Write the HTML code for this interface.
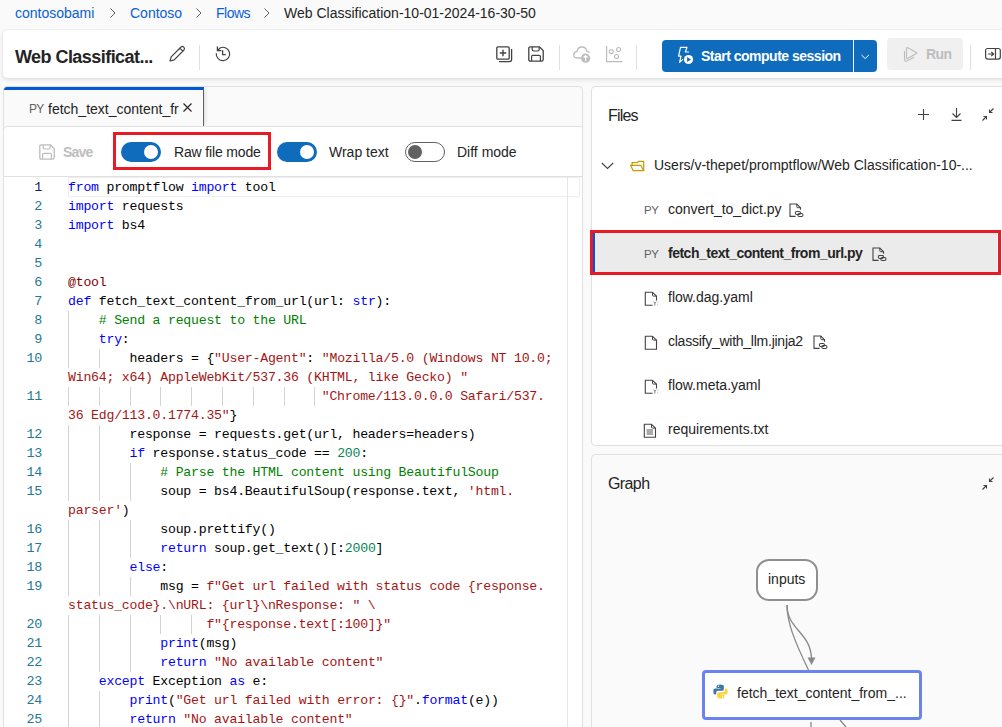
<!DOCTYPE html>
<html><head><meta charset="utf-8">
<style>
*{box-sizing:border-box;margin:0;padding:0}
html,body{width:1002px;height:727px;overflow:hidden;background:#fafafa;font-family:"Liberation Sans",sans-serif;color:#242424}
.a{position:absolute;white-space:nowrap}
svg{position:absolute;overflow:visible}
.bc{font-size:14px;line-height:17px;top:5px;color:#0b5ed7}
#hdr{position:absolute;left:3px;top:30px;width:1010px;height:48px;background:#fff;border-radius:4px;box-shadow:0 2px 4px rgba(0,0,0,.10),0 0 2px rgba(0,0,0,.12)}
#title{left:15px;top:46px;font-size:18px;font-weight:700;letter-spacing:-0.55px;line-height:22px;color:#242424}
.vdiv{position:absolute;width:1px;background:#e0e0e0}
#lp{position:absolute;left:3px;top:86px;width:580px;height:700px;background:#fafafa;border:1px solid #e0e0e0;border-radius:4px;overflow:hidden}
#rp1{position:absolute;left:591px;top:86px;width:430px;height:360px;background:#fff;border:1px solid #e0e0e0;border-radius:4px}
#rp2{position:absolute;left:591px;top:454px;width:430px;height:300px;background:#fafafa;border:1px solid #e0e0e0;border-radius:4px}
.ln{position:absolute;left:0;width:42px;text-align:right;font-family:"Liberation Mono",monospace;font-size:13.4px;letter-spacing:-0.34px;line-height:19px;color:#237893}
.ln.cur{color:#0b216f}
.cl{position:absolute;left:68px;font-family:"Liberation Mono",monospace;font-size:13.2px;letter-spacing:-0.225px;line-height:19px;white-space:pre;color:#000}
.ig{position:absolute;width:1px;height:19px;background:#d3d3d3}
.k{color:#0000ff}.s{color:#a31515}.c{color:#008000}.n{color:#098658}.t{color:#800000}
.tx{font-size:14px;line-height:17px}
.tog{position:absolute;width:40px;height:20px;border-radius:10px;background:#0f6cbd}
.tog i{position:absolute;top:3px;left:23px;width:14px;height:14px;border-radius:50%;background:#fff}
.tog.off{background:#fff;border:1px solid #616161}
.tog.off i{left:2px;top:2px;background:#616161}
.fr{font-size:14px;line-height:17px;color:#242424}
.py{font-size:11.5px;line-height:14px;color:#616161;letter-spacing:-0.5px}
</style></head><body>
<!-- breadcrumb -->
<div class="a bc" style="left:15px">contosobami</div>
<svg style="left:110px;top:8px" width="6" height="10"><path d="M0.5 0.5 L5 5 L0.5 9.5" fill="none" stroke="#616161" stroke-width="1"/></svg>
<div class="a bc" style="left:130px">Contoso</div>
<svg style="left:196px;top:8px" width="6" height="10"><path d="M0.5 0.5 L5 5 L0.5 9.5" fill="none" stroke="#616161" stroke-width="1"/></svg>
<div class="a bc" style="left:216px;letter-spacing:-0.5px">Flows</div>
<svg style="left:264px;top:8px" width="6" height="10"><path d="M0.5 0.5 L5 5 L0.5 9.5" fill="none" stroke="#616161" stroke-width="1"/></svg>
<div class="a bc" style="left:284px;color:#242424">Web Classification-10-01-2024-16-30-50</div>

<!-- header -->
<div id="hdr"></div>
<div class="a" id="title">Web Classificat...</div>
<!-- pencil -->
<svg style="left:168px;top:45px" width="18" height="18" viewBox="0 0 18 18"><path d="M2 16 L3.2 11.8 L13 2 Q14.5 0.8 15.8 2.2 Q17.1 3.6 16 5 L6.2 14.8 Z M11.8 3.2 L14.8 6.2" fill="none" stroke="#424242" stroke-width="1.2" stroke-linejoin="round"/></svg>
<div class="vdiv" style="left:199px;top:45px;height:25px"></div>
<!-- history -->
<svg style="left:215px;top:46px" width="16" height="16" viewBox="0 0 16 16"><path d="M1.3 7.2 A6.7 6.7 0 1 0 4.6 2.2" fill="none" stroke="#424242" stroke-width="1.2"/><path d="M2.4 0.6 V4.6 H6.4 M2.4 4.6 L5 2.2" fill="none" stroke="#424242" stroke-width="1.3"/><path d="M7.6 4.2 V8.6 H10.8" fill="none" stroke="#424242" stroke-width="1.3"/></svg>

<!-- toolbar icons -->
<svg style="left:496px;top:46px" width="17" height="17" viewBox="0 0 17 17"><rect x="0.8" y="0.8" width="12.4" height="12.4" rx="1.2" fill="none" stroke="#424242" stroke-width="1.3"/><path d="M3 15.6 H13.5 Q15.6 15.6 15.6 13.5 V3" fill="none" stroke="#424242" stroke-width="1.3"/><path d="M7 3.8 V10.2 M3.8 7 H10.2" stroke="#424242" stroke-width="1.4"/></svg>
<svg style="left:528px;top:46px" width="16" height="16" viewBox="0 0 16 16"><path d="M2.5 0.8 H11.5 L15.2 4.5 V13.5 Q15.2 15.2 13.5 15.2 H2.5 Q0.8 15.2 0.8 13.5 V2.5 Q0.8 0.8 2.5 0.8 Z" fill="none" stroke="#424242" stroke-width="1.3"/><path d="M4.2 1 V3.6 Q4.2 5 5.6 5 H9.8 Q11.2 5 11.2 3.6 V1 M3.6 15 V10.6 Q3.6 9.4 4.8 9.4 H11.2 Q12.4 9.4 12.4 10.6 V15" fill="none" stroke="#424242" stroke-width="1.2"/></svg>
<div class="vdiv" style="left:559px;top:45px;height:25px"></div>
<svg style="left:573px;top:46px" width="18" height="17" viewBox="0 0 18 17"><path d="M8.5 12 H4 Q0.8 12 0.8 8.8 Q0.8 5.8 4 5.6 Q4.6 1 9 1 Q13.2 1 13.8 5.2 Q15.8 5.4 16.6 7" fill="none" stroke="#bdbdbd" stroke-width="1.3"/><circle cx="12.6" cy="12.2" r="4.6" fill="#bdbdbd"/><path d="M12.6 15 V9.6 M10.6 11.5 L12.6 9.5 L14.6 11.5" fill="none" stroke="#fff" stroke-width="1.2"/></svg>
<svg style="left:606px;top:46px" width="17" height="17" viewBox="0 0 17 17"><path d="M0.6 0 V15.6 H16.5" fill="none" stroke="#bdbdbd" stroke-width="1.2"/><circle cx="5.3" cy="5.6" r="2" fill="none" stroke="#bdbdbd" stroke-width="1.2"/><circle cx="12.6" cy="3.5" r="2" fill="none" stroke="#bdbdbd" stroke-width="1.2"/><circle cx="10.5" cy="10.5" r="2" fill="none" stroke="#bdbdbd" stroke-width="1.2"/></svg>
<div class="vdiv" style="left:636px;top:45px;height:25px"></div>

<!-- start compute session -->
<div class="a" style="left:662px;top:40px;width:215px;height:32px;background:#0f6cbd;border-radius:4px"></div>
<svg style="left:674px;top:44px" width="24" height="24" viewBox="0 0 24 24"><path d="M6.5 3.4 H13 L11.3 8 H14.6 M6.5 3.4 L4.6 12.2 H7 L5.6 18.4 L8.6 15.6" fill="none" stroke="#fff" stroke-width="1.2" stroke-linejoin="round" stroke-linecap="round"/><circle cx="14.5" cy="15.5" r="4.6" fill="#fff"/><path d="M13.1 13.1 L17 15.5 L13.1 17.9 Z" fill="#0f6cbd"/></svg>
<div class="a" style="left:701px;top:48px;font-size:14px;line-height:17px;font-weight:700;color:#fff;letter-spacing:-0.5px">Start compute session</div>
<div class="a" style="left:853px;top:40px;width:1px;height:32px;background:#fff"></div>
<svg style="left:861px;top:54px" width="9" height="6" viewBox="0 0 9 6"><path d="M0.5 1 L4.2 4.6 L7.9 1" fill="none" stroke="#fff" stroke-width="1"/></svg>
<!-- run -->
<div class="a" style="left:887px;top:38px;width:76px;height:32px;background:#f0f0f0;border-radius:4px"></div>
<svg style="left:900px;top:44px" width="20" height="20" viewBox="0 0 20 20"><path d="M7.3 3.5 Q6.5 3.2 6.5 4.3 V14 Q6.5 15.2 7.6 14.6 L16.4 9.6 Q17.2 9 16.4 8.4 Z" fill="none" stroke="#bdbdbd" stroke-width="1.1" stroke-linejoin="round"/><path d="M4.5 7 V15 Q4.5 18 7.5 16.8 L14 13.3" fill="none" stroke="#bdbdbd" stroke-width="1.1"/></svg>
<div class="a" style="left:926px;top:46px;font-size:14px;line-height:17px;font-weight:700;color:#bdbdbd;letter-spacing:-0.6px">Run</div>
<div class="vdiv" style="left:970px;top:45px;height:25px"></div>
<svg style="left:984px;top:47px" width="18" height="14" viewBox="0 0 18 14"><rect x="1.6" y="1.5" width="14.7" height="10.6" rx="2" fill="none" stroke="#424242" stroke-width="1.2"/><path d="M11.5 1.5 V12.1 M4 7 H9.3 M7.3 5 L9.6 7 L7.3 9" fill="none" stroke="#424242" stroke-width="1.2"/></svg>

<!-- left panel -->
<div id="lp">
  <div class="a" style="left:0;top:0;width:200px;height:40px;background:#fafafa;border-top:3px solid #0058d6;border-right:1px solid #616161;box-shadow:3px 0 4px -2px rgba(0,0,0,.14)"></div>
  <div class="a" style="left:0;top:39px;width:580px;height:50px;background:#fff;border-top:1px solid #e0e0e0;border-radius:4px 4px 0 0"></div>
  <div class="a" style="left:0;top:89px;width:580px;height:620px;background:#fff;border-top:1px solid #e0e0e0"></div>
</div>
<div class="a py" style="left:29px;top:102px;font-size:12px;letter-spacing:-0.7px">PY</div>
<div class="a tx" style="left:48px;top:101px;width:131px;overflow:hidden;font-size:14px">fetch_text_content_from_url.py</div>
<svg style="left:183px;top:103px" width="9" height="9" viewBox="0 0 9 9"><path d="M0.5 0.5 L8.5 8.5 M8.5 0.5 L0.5 8.5" stroke="#242424" stroke-width="1.1"/></svg>

<!-- toolbar -->
<svg style="left:39px;top:144px" width="16" height="16" viewBox="0 0 16 16"><path d="M2.5 0.8 H11.5 L15.2 4.5 V13.5 Q15.2 15.2 13.5 15.2 H2.5 Q0.8 15.2 0.8 13.5 V2.5 Q0.8 0.8 2.5 0.8 Z" fill="none" stroke="#bdbdbd" stroke-width="1.3"/><path d="M4.2 1 V3.6 Q4.2 5 5.6 5 H9.8 Q11.2 5 11.2 3.6 V1 M3.6 15 V10.6 Q3.6 9.4 4.8 9.4 H11.2 Q12.4 9.4 12.4 10.6 V15" fill="none" stroke="#bdbdbd" stroke-width="1.2"/></svg>
<div class="a tx" style="left:63px;top:144px;font-weight:700;color:#bdbdbd;letter-spacing:-0.8px">Save</div>
<div class="a" style="left:113px;top:132px;width:158px;height:38px;border:3px solid #ea1a24"></div>
<div class="tog" style="left:121px;top:142px"><i></i></div>
<div class="a tx" style="left:174px;top:144px;letter-spacing:-0.15px">Raw file mode</div>
<div class="tog" style="left:277px;top:142px"><i></i></div>
<div class="a tx" style="left:329px;top:144px">Wrap text</div>
<div class="tog off" style="left:405px;top:142px"><i></i></div>
<div class="a tx" style="left:457px;top:144px">Diff mode</div>

<!-- code -->
<div class="a" style="left:68px;top:177px;width:512px;height:20px;border:1px solid #eeeeee"></div>
<div class="a" style="left:567px;top:177px;width:1px;height:560px;background:#e6e6e6"></div>
<div class="ln cur" style="top:178px">1</div>
<div class="cl" style="top:178px"><span class="k">from</span> promptflow <span class="k">import</span> tool</div>
<div class="ln" style="top:197px">2</div>
<div class="cl" style="top:197px"><span class="k">import</span> requests</div>
<div class="ln" style="top:216px">3</div>
<div class="cl" style="top:216px"><span class="k">import</span> bs4</div>
<div class="ln" style="top:235px">4</div>
<div class="cl" style="top:235px"></div>
<div class="ln" style="top:254px">5</div>
<div class="cl" style="top:254px"></div>
<div class="ln" style="top:273px">6</div>
<div class="cl" style="top:273px"><span class="t">@tool</span></div>
<div class="ln" style="top:292px">7</div>
<div class="cl" style="top:292px"><span class="k">def</span> fetch_text_content_from_url(url: <span class="k">str</span>):</div>
<div class="ln" style="top:311px">8</div>
<div class="ig" style="left:68.0px;top:311px"></div>
<div class="cl" style="top:311px">    <span class="c"># Send a request to the URL</span></div>
<div class="ln" style="top:330px">9</div>
<div class="ig" style="left:68.0px;top:330px"></div>
<div class="cl" style="top:330px">    <span class="k">try</span>:</div>
<div class="ln" style="top:349px">10</div>
<div class="ig" style="left:68.0px;top:349px"></div>
<div class="ig" style="left:98.8px;top:349px"></div>
<div class="cl" style="top:349px">        headers = {<span class="s">"User-Agent"</span>: <span class="s">"Mozilla/5.0 (Windows NT 10.0;</span></div>
<div class="cl" style="top:368px"><span class="s">Win64; x64) AppleWebKit/537.36 (KHTML, like Gecko) "</span></div>
<div class="ln" style="top:387px">11</div>
<div class="ig" style="left:68.0px;top:387px"></div>
<div class="ig" style="left:98.8px;top:387px"></div>
<div class="ig" style="left:129.6px;top:387px"></div>
<div class="ig" style="left:160.4px;top:387px"></div>
<div class="ig" style="left:191.2px;top:387px"></div>
<div class="ig" style="left:221.9px;top:387px"></div>
<div class="ig" style="left:252.7px;top:387px"></div>
<div class="ig" style="left:283.5px;top:387px"></div>
<div class="ig" style="left:314.3px;top:387px"></div>
<div class="cl" style="top:387px">                                 <span class="s">"Chrome/113.0.0.0 Safari/537.</span></div>
<div class="cl" style="top:406px"><span class="s">36 Edg/113.0.1774.35"</span>}</div>
<div class="ln" style="top:425px">12</div>
<div class="ig" style="left:68.0px;top:425px"></div>
<div class="ig" style="left:98.8px;top:425px"></div>
<div class="cl" style="top:425px">        response = requests.get(url, headers=headers)</div>
<div class="ln" style="top:444px">13</div>
<div class="ig" style="left:68.0px;top:444px"></div>
<div class="ig" style="left:98.8px;top:444px"></div>
<div class="cl" style="top:444px">        <span class="k">if</span> response.status_code == <span class="n">200</span>:</div>
<div class="ln" style="top:463px">14</div>
<div class="ig" style="left:68.0px;top:463px"></div>
<div class="ig" style="left:98.8px;top:463px"></div>
<div class="ig" style="left:129.6px;top:463px"></div>
<div class="cl" style="top:463px">            <span class="c"># Parse the HTML content using BeautifulSoup</span></div>
<div class="ln" style="top:482px">15</div>
<div class="ig" style="left:68.0px;top:482px"></div>
<div class="ig" style="left:98.8px;top:482px"></div>
<div class="ig" style="left:129.6px;top:482px"></div>
<div class="cl" style="top:482px">            soup = bs4.BeautifulSoup(response.text, <span class="s">'html.</span></div>
<div class="cl" style="top:501px"><span class="s">parser'</span>)</div>
<div class="ln" style="top:520px">16</div>
<div class="ig" style="left:68.0px;top:520px"></div>
<div class="ig" style="left:98.8px;top:520px"></div>
<div class="ig" style="left:129.6px;top:520px"></div>
<div class="cl" style="top:520px">            soup.prettify()</div>
<div class="ln" style="top:539px">17</div>
<div class="ig" style="left:68.0px;top:539px"></div>
<div class="ig" style="left:98.8px;top:539px"></div>
<div class="ig" style="left:129.6px;top:539px"></div>
<div class="cl" style="top:539px">            <span class="k">return</span> soup.get_text()[:<span class="n">2000</span>]</div>
<div class="ln" style="top:558px">18</div>
<div class="ig" style="left:68.0px;top:558px"></div>
<div class="ig" style="left:98.8px;top:558px"></div>
<div class="cl" style="top:558px">        <span class="k">else</span>:</div>
<div class="ln" style="top:577px">19</div>
<div class="ig" style="left:68.0px;top:577px"></div>
<div class="ig" style="left:98.8px;top:577px"></div>
<div class="ig" style="left:129.6px;top:577px"></div>
<div class="cl" style="top:577px">            msg = <span class="s">f"Get url failed with status code {response.</span></div>
<div class="cl" style="top:596px"><span class="s">status_code}.\nURL: {url}\nResponse: " \</span></div>
<div class="ln" style="top:615px">20</div>
<div class="ig" style="left:68.0px;top:615px"></div>
<div class="ig" style="left:98.8px;top:615px"></div>
<div class="ig" style="left:129.6px;top:615px"></div>
<div class="ig" style="left:160.4px;top:615px"></div>
<div class="ig" style="left:191.2px;top:615px"></div>
<div class="cl" style="top:615px">                  <span class="s">f"{response.text[:100]}"</span></div>
<div class="ln" style="top:634px">21</div>
<div class="ig" style="left:68.0px;top:634px"></div>
<div class="ig" style="left:98.8px;top:634px"></div>
<div class="ig" style="left:129.6px;top:634px"></div>
<div class="cl" style="top:634px">            <span class="k">print</span>(msg)</div>
<div class="ln" style="top:653px">22</div>
<div class="ig" style="left:68.0px;top:653px"></div>
<div class="ig" style="left:98.8px;top:653px"></div>
<div class="ig" style="left:129.6px;top:653px"></div>
<div class="cl" style="top:653px">            <span class="k">return</span> <span class="s">"No available content"</span></div>
<div class="ln" style="top:672px">23</div>
<div class="ig" style="left:68.0px;top:672px"></div>
<div class="cl" style="top:672px">    <span class="k">except</span> Exception <span class="k">as</span> e:</div>
<div class="ln" style="top:691px">24</div>
<div class="ig" style="left:68.0px;top:691px"></div>
<div class="ig" style="left:98.8px;top:691px"></div>
<div class="cl" style="top:691px">        <span class="k">print</span>(<span class="s">"Get url failed with error: {}"</span>.<span class="k">format</span>(e))</div>
<div class="ln" style="top:710px">25</div>
<div class="ig" style="left:68.0px;top:710px"></div>
<div class="ig" style="left:98.8px;top:710px"></div>
<div class="cl" style="top:710px">        <span class="k">return</span> <span class="s">"No available content"</span></div>


<!-- files panel -->
<div id="rp1"></div>
<div class="a" style="left:608px;top:106px;font-size:16px;line-height:19px;letter-spacing:-0.8px;color:#242424">Files</div>
<svg style="left:918px;top:109px" width="11" height="11" viewBox="0 0 11 11"><path d="M5.5 0 V11 M0 5.5 H11" stroke="#424242" stroke-width="1.1"/></svg>
<svg style="left:951px;top:108px" width="11" height="13" viewBox="0 0 11 13"><path d="M5.5 0 V9 M1.5 5.5 L5.5 9.5 L9.5 5.5 M0.5 12.4 H10.5" fill="none" stroke="#424242" stroke-width="1.1"/></svg>
<svg style="left:982px;top:108px" width="12" height="13" viewBox="0 0 12 13"><path d="M11.5 0.5 L7.5 4.5 M7.5 1.5 V4.5 H10.5 M0.5 12.5 L4.5 8.5 M1.5 8.5 H4.5 V11.5" fill="none" stroke="#424242" stroke-width="1.1"/></svg>
<svg style="left:601px;top:162px" width="13" height="8" viewBox="0 0 13 8"><path d="M0.8 1 L6.5 6.5 L12.2 1" fill="none" stroke="#424242" stroke-width="1.1"/></svg>
<svg style="left:629px;top:160px" width="16" height="12" viewBox="0 0 16 12"><path d="M3.1 5 V2.6 H8.5 L9.5 1.3 H14.7 V10.7" fill="none" stroke="#c19c00" stroke-width="1.2" stroke-linejoin="round"/><path d="M1.6 5.3 H11.7 L14.7 10.7 H4.2 Z" fill="none" stroke="#c19c00" stroke-width="1.2" stroke-linejoin="round"/></svg>
<div class="a fr" style="left:654px;top:157px">Users/v-thepet/promptflow/Web Classification-10-...</div>

<div class="a py" style="left:644px;top:203px">PY</div>
<div class="a fr" style="left:668px;top:201px">convert_to_dict.py</div>
<svg style="left:789px;top:203px" width="16" height="15" viewBox="0 0 16 15"><path d="M6.6 13.4 H1 V1 H7.8 L11.5 4.7 V6.8" fill="none" stroke="#424242" stroke-width="1.1"/><path d="M7.8 1 V3.8 Q7.8 4.7 8.7 4.7 H11.5" fill="none" stroke="#424242" stroke-width="1"/><rect x="6.3" y="8.4" width="5.2" height="3" rx="1.5" fill="none" stroke="#424242" stroke-width="1.05"/><rect x="8.8" y="10.5" width="5.2" height="3" rx="1.5" fill="none" stroke="#424242" stroke-width="1.05"/></svg>

<div class="a" style="left:592px;top:233px;width:405px;height:39px;background:#ebebeb"></div>
<div class="a" style="left:593px;top:233px;width:2px;height:39px;background:#0058d6"></div>
<div class="a" style="left:590px;top:230px;width:411px;height:45px;border:3px solid #ea1a24"></div>
<div class="a py" style="left:644px;top:247px">PY</div>
<div class="a fr" style="left:668px;top:245px;font-weight:700;letter-spacing:-0.5px">fetch_text_content_from_url.py</div>
<svg style="left:872px;top:247px" width="16" height="15" viewBox="0 0 16 15"><path d="M6.6 13.4 H1 V1 H7.8 L11.5 4.7 V6.8" fill="none" stroke="#424242" stroke-width="1.1"/><path d="M7.8 1 V3.8 Q7.8 4.7 8.7 4.7 H11.5" fill="none" stroke="#424242" stroke-width="1"/><rect x="6.3" y="8.4" width="5.2" height="3" rx="1.5" fill="none" stroke="#424242" stroke-width="1.05"/><rect x="8.8" y="10.5" width="5.2" height="3" rx="1.5" fill="none" stroke="#424242" stroke-width="1.05"/></svg>

<svg style="left:644px;top:291px" width="14" height="16" viewBox="0 0 14 16"><path d="M8.6 14.3 H1.3 V1.3 H8.5 L12.5 5.1 V9.6" fill="none" stroke="#424242" stroke-width="1.1" stroke-linejoin="round"/><path d="M8.5 1.3 V4.2 Q8.5 5.1 9.4 5.1 H12.5" fill="none" stroke="#424242" stroke-width="1"/><path d="M9.6 10.6 L10.9 12.2 L12.2 10.6 M10.9 12.2 V14.6" fill="none" stroke="#6a6a6a" stroke-width="0.8"/><path d="M13.2 11.2 h0.7 M13.2 13.6 h0.7" stroke="#9a9a9a" stroke-width="0.8"/></svg>
<div class="a fr" style="left:668px;top:289px">flow.dag.yaml</div>

<svg style="left:644px;top:335px" width="14" height="16" viewBox="0 0 14 16"><path d="M1.3 1.3 H8.5 L12.5 5.1 V14.3 H1.3 Z" fill="none" stroke="#424242" stroke-width="1.1" stroke-linejoin="round"/><path d="M8.5 1.3 V4.2 Q8.5 5.1 9.4 5.1 H12.5" fill="none" stroke="#424242" stroke-width="1"/></svg>
<div class="a fr" style="left:668px;top:333px;letter-spacing:-0.25px">classify_with_llm.jinja2</div>
<svg style="left:813px;top:335px" width="16" height="15" viewBox="0 0 16 15"><path d="M6.6 13.4 H1 V1 H7.8 L11.5 4.7 V6.8" fill="none" stroke="#424242" stroke-width="1.1"/><path d="M7.8 1 V3.8 Q7.8 4.7 8.7 4.7 H11.5" fill="none" stroke="#424242" stroke-width="1"/><rect x="6.3" y="8.4" width="5.2" height="3" rx="1.5" fill="none" stroke="#424242" stroke-width="1.05"/><rect x="8.8" y="10.5" width="5.2" height="3" rx="1.5" fill="none" stroke="#424242" stroke-width="1.05"/></svg>

<svg style="left:644px;top:379px" width="14" height="16" viewBox="0 0 14 16"><path d="M8.6 14.3 H1.3 V1.3 H8.5 L12.5 5.1 V9.6" fill="none" stroke="#424242" stroke-width="1.1" stroke-linejoin="round"/><path d="M8.5 1.3 V4.2 Q8.5 5.1 9.4 5.1 H12.5" fill="none" stroke="#424242" stroke-width="1"/><path d="M9.6 10.6 L10.9 12.2 L12.2 10.6 M10.9 12.2 V14.6" fill="none" stroke="#6a6a6a" stroke-width="0.8"/><path d="M13.2 11.2 h0.7 M13.2 13.6 h0.7" stroke="#9a9a9a" stroke-width="0.8"/></svg>
<div class="a fr" style="left:668px;top:377px">flow.meta.yaml</div>

<svg style="left:643px;top:423px" width="14" height="16" viewBox="0 0 14 16"><path d="M1.3 1.3 H8.5 L12.5 5.1 V14.3 H1.3 Z" fill="none" stroke="#424242" stroke-width="1.1" stroke-linejoin="round"/><path d="M8.5 1.3 V4.2 Q8.5 5.1 9.4 5.1 H12.5" fill="none" stroke="#424242" stroke-width="1"/><path d="M3.6 7 H10 M3.6 9 H10 M3.6 11 H10" fill="none" stroke="#424242" stroke-width="0.9"/></svg>
<div class="a fr" style="left:668px;top:421px">requirements.txt</div>

<!-- graph panel -->
<div id="rp2"></div>
<div class="a" style="left:608px;top:474px;font-size:16px;line-height:19px;letter-spacing:-0.6px;color:#242424">Graph</div>
<svg style="left:982px;top:477px" width="12" height="13" viewBox="0 0 12 13"><path d="M11.5 0.5 L7.5 4.5 M7.5 1.5 V4.5 H10.5 M0.5 12.5 L4.5 8.5 M1.5 8.5 H4.5 V11.5" fill="none" stroke="#424242" stroke-width="1.1"/></svg>
<svg style="left:0;top:0" width="1002" height="727" viewBox="0 0 1002 727"><path d="M787 605 C787 622 794 640 808.5 670" fill="none" stroke="#8a8a8a" stroke-width="1.3"/><path d="M787 605 C787 630 811 632 811.5 659" fill="none" stroke="#8a8a8a" stroke-width="1.4"/><path d="M807.5 657.5 L815.5 657.5 L811.5 665 Z" fill="#8a8a8a"/><path d="M811 722 V727 M840 720 L846 727" fill="none" stroke="#8a8a8a" stroke-width="1.3"/></svg>
<div class="a" style="left:756px;top:559px;width:62px;height:42px;border:2px solid #8f8f8f;border-radius:13px;background:#fff"></div>
<div class="a fr" style="left:768px;top:571px">inputs</div>
<div class="a" style="left:702px;top:670px;width:220px;height:50px;border:3px solid #6b83ee;border-radius:4px;background:#fff"></div>
<svg style="left:713px;top:684px" width="15" height="15" viewBox="0 0 15 15"><path d="M7.3 0.5 Q3.5 0.5 3.6 2.3 V4 H7.5 V4.6 H2.2 Q0.3 4.6 0.3 7.5 Q0.3 10.4 2 10.4 H3.2 V8.6 Q3.2 6.8 5 6.8 H9.2 Q10.8 6.8 10.8 5.2 V2.3 Q10.8 0.5 7.3 0.5 Z" fill="#3b77a8"/><path d="M7.7 14.5 Q11.5 14.5 11.4 12.7 V11 H7.5 V10.4 H12.8 Q14.7 10.4 14.7 7.5 Q14.7 4.6 13 4.6 H11.8 V6.4 Q11.8 8.2 10 8.2 H5.8 Q4.2 8.2 4.2 9.8 V12.7 Q4.2 14.5 7.7 14.5 Z" fill="#fdd43a"/><circle cx="5.5" cy="2.2" r="0.7" fill="#fff"/><circle cx="9.5" cy="12.8" r="0.7" fill="#fff"/></svg>
<div class="a fr" style="left:737px;top:685px">fetch_text_content_from_...</div>
</body></html>
